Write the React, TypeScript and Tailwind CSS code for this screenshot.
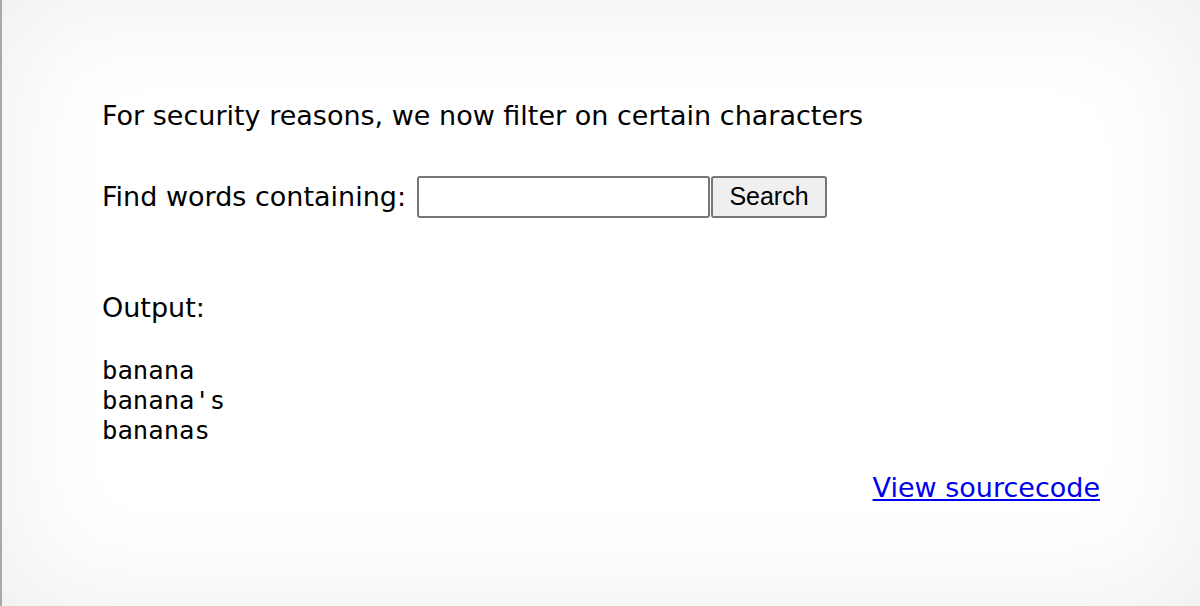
export default function App() {
  return (
    <div className="h-[606px] w-[1200px] border-l-2 border-[#a9a9a9] bg-white shadow-[inset_0_0_120px_rgba(0,0,0,0.07)] font-['DejaVu_Sans',sans-serif] text-[27px] text-black">
      <div className="px-[100px] pt-[96px]">
        <p className="leading-[40px]">For security reasons, we now filter on certain characters</p>
        <form className="mt-[40px] flex items-center">
          <label className="leading-[40px]">Find words containing:</label>
          <input
            type="text"
            className="ml-[11px] h-[42px] w-[293px] rounded-[3px] border-2 border-[#767676] bg-white"
          />
          <button
            type="button"
            className="ml-[1px] h-[42px] w-[116px] rounded-[3px] border-2 border-[#767676] bg-[#efefef] font-['Liberation_Sans',sans-serif] text-[25px]"
          >
            Search
          </button>
        </form>
        <p className="mt-[70px] leading-[40px]">Output:</p>
        <pre className="mt-[27px] font-['DejaVu_Sans_Mono',monospace] text-[25.6px] leading-[30px]">
          {"banana\nbanana's\nbananas"}
        </pre>
        <div className="mt-[23px] flex justify-end">
          <a href="#" className="leading-[40px] text-[#0000ee] underline">View sourcecode</a>
        </div>
      </div>
    </div>
  );
}
